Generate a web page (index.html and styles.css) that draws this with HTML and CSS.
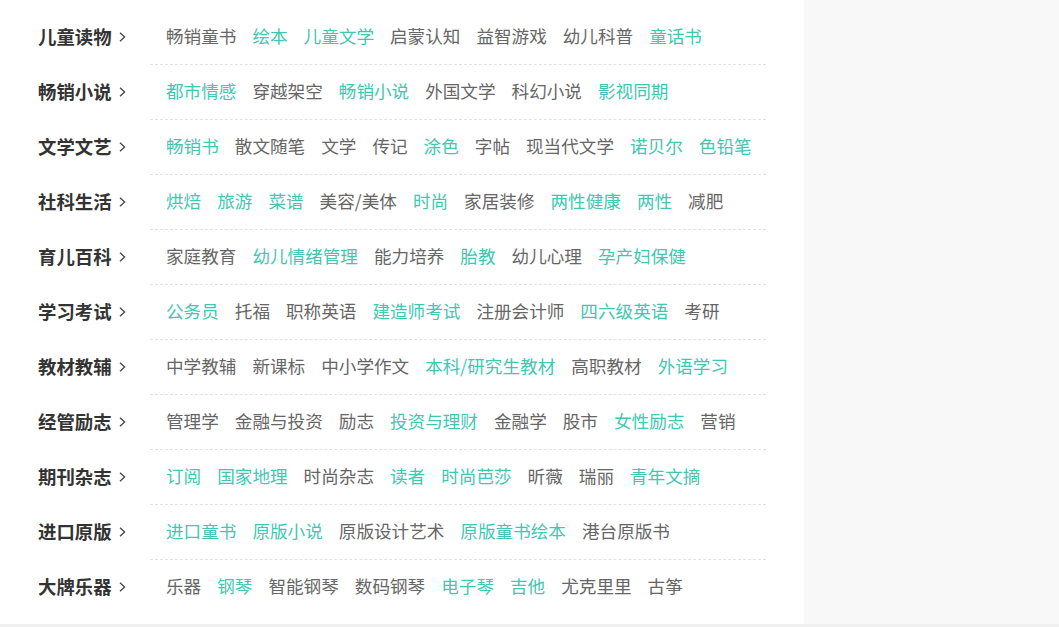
FILE: index.html
```html
<!DOCTYPE html>
<html lang="zh-CN">
<head>
<meta charset="utf-8">
<title>图书分类</title>
<link rel="stylesheet" href="styles.css">
</head>
<body>
<div class="page">
  <main class="menu">
    <div class="row"><a class="cat">儿童读物<svg class="chev" viewBox="0 0 7 10"><path d="M1 0.8 L5.6 5 L1 9.2"/></svg></a><div class="links"><a>畅销童书</a><a class="hl">绘本</a><a class="hl">儿童文学</a><a>启蒙认知</a><a>益智游戏</a><a>幼儿科普</a><a class="hl">童话书</a></div></div>
    <div class="row"><a class="cat">畅销小说<svg class="chev" viewBox="0 0 7 10"><path d="M1 0.8 L5.6 5 L1 9.2"/></svg></a><div class="links"><a class="hl">都市情感</a><a>穿越架空</a><a class="hl">畅销小说</a><a>外国文学</a><a>科幻小说</a><a class="hl">影视同期</a></div></div>
    <div class="row"><a class="cat">文学文艺<svg class="chev" viewBox="0 0 7 10"><path d="M1 0.8 L5.6 5 L1 9.2"/></svg></a><div class="links"><a class="hl">畅销书</a><a>散文随笔</a><a>文学</a><a>传记</a><a class="hl">涂色</a><a>字帖</a><a>现当代文学</a><a class="hl">诺贝尔</a><a class="hl">色铅笔</a></div></div>
    <div class="row"><a class="cat">社科生活<svg class="chev" viewBox="0 0 7 10"><path d="M1 0.8 L5.6 5 L1 9.2"/></svg></a><div class="links"><a class="hl">烘焙</a><a class="hl">旅游</a><a class="hl">菜谱</a><a>美容/美体</a><a class="hl">时尚</a><a>家居装修</a><a class="hl">两性健康</a><a class="hl">两性</a><a>减肥</a></div></div>
    <div class="row"><a class="cat">育儿百科<svg class="chev" viewBox="0 0 7 10"><path d="M1 0.8 L5.6 5 L1 9.2"/></svg></a><div class="links"><a>家庭教育</a><a class="hl">幼儿情绪管理</a><a>能力培养</a><a class="hl">胎教</a><a>幼儿心理</a><a class="hl">孕产妇保健</a></div></div>
    <div class="row"><a class="cat">学习考试<svg class="chev" viewBox="0 0 7 10"><path d="M1 0.8 L5.6 5 L1 9.2"/></svg></a><div class="links"><a class="hl">公务员</a><a>托福</a><a>职称英语</a><a class="hl">建造师考试</a><a>注册会计师</a><a class="hl">四六级英语</a><a>考研</a></div></div>
    <div class="row"><a class="cat">教材教辅<svg class="chev" viewBox="0 0 7 10"><path d="M1 0.8 L5.6 5 L1 9.2"/></svg></a><div class="links"><a>中学教辅</a><a>新课标</a><a>中小学作文</a><a class="hl">本科/研究生教材</a><a>高职教材</a><a class="hl">外语学习</a></div></div>
    <div class="row"><a class="cat">经管励志<svg class="chev" viewBox="0 0 7 10"><path d="M1 0.8 L5.6 5 L1 9.2"/></svg></a><div class="links"><a>管理学</a><a>金融与投资</a><a>励志</a><a class="hl">投资与理财</a><a>金融学</a><a>股市</a><a class="hl">女性励志</a><a>营销</a></div></div>
    <div class="row"><a class="cat">期刊杂志<svg class="chev" viewBox="0 0 7 10"><path d="M1 0.8 L5.6 5 L1 9.2"/></svg></a><div class="links"><a class="hl">订阅</a><a class="hl">国家地理</a><a>时尚杂志</a><a class="hl">读者</a><a class="hl">时尚芭莎</a><a>昕薇</a><a>瑞丽</a><a class="hl">青年文摘</a></div></div>
    <div class="row"><a class="cat">进口原版<svg class="chev" viewBox="0 0 7 10"><path d="M1 0.8 L5.6 5 L1 9.2"/></svg></a><div class="links"><a class="hl">进口童书</a><a class="hl">原版小说</a><a>原版设计艺术</a><a class="hl">原版童书绘本</a><a>港台原版书</a></div></div>
    <div class="row last"><a class="cat">大牌乐器<svg class="chev" viewBox="0 0 7 10"><path d="M1 0.8 L5.6 5 L1 9.2"/></svg></a><div class="links"><a>乐器</a><a class="hl">钢琴</a><a>智能钢琴</a><a>数码钢琴</a><a class="hl">电子琴</a><a class="hl">吉他</a><a>尤克里里</a><a>古筝</a></div></div>
  </main>
  <aside class="side"></aside>
</div>
<div class="foot"></div>
</body>
</html>
```

FILE: styles.css
```css
* { box-sizing: border-box; }
html, body { margin: 0; padding: 0; }
body {
  background: #fff;
  font-family: "Microsoft YaHei", "Noto Sans CJK SC", "Noto Sans", sans-serif;
  overflow: hidden;
}
.page {
  display: flex;
  height: 624px;
}
.menu {
  width: 804px;
  background: #fff;
  padding: 10px 0 9px 38px;
}
.side {
  flex: 1;
  background: #f8f8f8;
}
.foot {
  height: 3px;
  background: #f0f0f0;
}
.row {
  display: flex;
  height: 55px;
}
.cat {
  width: 112px;
  display: flex;
  align-items: center;
  padding-bottom: 3px;
  font-size: 18.4px;
  font-weight: 700;
  color: #333;
  line-height: 1;
}
.chev {
  width: 7px;
  height: 10px;
  margin-left: 7px;
  margin-top: 2px;
  fill: none;
  stroke: #444;
  stroke-width: 1.3;
}
.links {
  width: 616px;
  display: flex;
  align-items: center;
  gap: 16px;
  padding-left: 16px;
  padding-bottom: 3px;
  border-bottom: 1px dashed #e2e2e2;
  font-size: 17.6px;
  line-height: 1;
}
.row.last .links { border-bottom: none; }
.links a {
  color: #666;
  white-space: nowrap;
}
.links a.hl { color: #3fc7b2; }
```
